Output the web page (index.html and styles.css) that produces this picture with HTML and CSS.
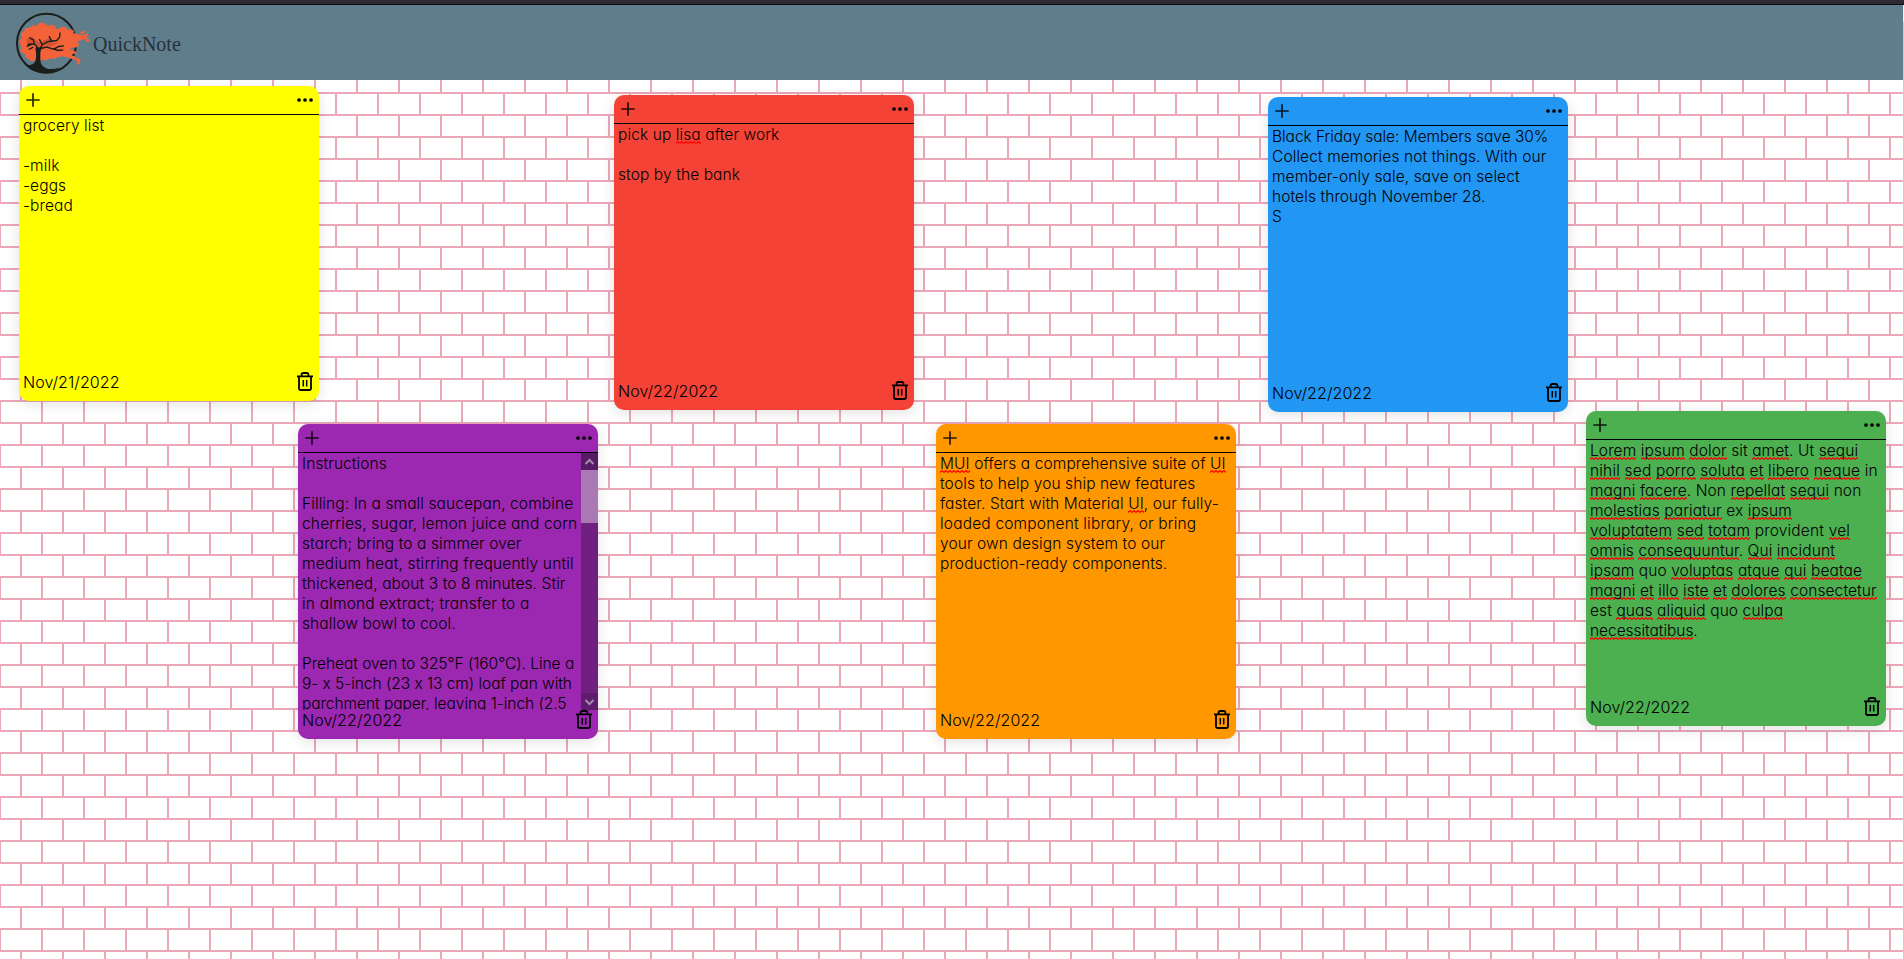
FILE: index.html
```html
<!DOCTYPE html>
<html lang="en">
<head>
<meta charset="utf-8">
<title>QuickNote</title>
<link rel="stylesheet" href="styles.css">
</head>
<body>
<svg width="0" height="0" class="defs">
  <symbol id="plus" viewBox="0 0 14 14"><path d="M7 .3v13.4M.3 7h13.4" stroke="#000" stroke-opacity=".85" stroke-width="1.7" fill="none"/></symbol>
  <symbol id="dots" viewBox="0 0 16 4"><circle cx="2" cy="2" r="1.85"/><circle cx="8" cy="2" r="1.85"/><circle cx="14" cy="2" r="1.85"/></symbol>
  <symbol id="trash" viewBox="0 0 16 19"><g fill="none" stroke="#000" stroke-width="1.8"><path d="M0 4.3h16M4.6 4V2.6Q4.6 1 6.2 1h3.6q1.6 0 1.6 1.6V4M2 4.5v11.7q0 1.8 1.8 1.8h8.4q1.8 0 1.8-1.8V4.5"/><path d="M6.3 8v6.6M9.7 8v6.6" stroke-width="1.5"/></g></symbol>
</svg>
<div class="topline"></div>
<header class="appbar">
  <svg class="logo" viewBox="45 28.5 240 198">
    <circle cx="139.500" cy="128" r="88.500" fill="none" stroke="#1b1f1b" stroke-width="6"/>
    <path fill="#f4623a" d="M58 120l8-8-4-12 10-8 4-9 14-2 8-7 12 2 6-7 12-3 10 6 10 4 10-3 8 4 2 8 12-2 8-5 10 2 4 8 12-2 8 5-2 7 12 2 10 4 12-2 10-4 2 5-8 5 8 2-4 6-14 1-8 4-10 2 6 5 0 8-8 5-12 1-6 4 12 5 8 5-2 5-10-2-4 5 10 4 4 5 10 1 4 6-4 12-8-2 2-8-10-5-10-2-4-5-10 0-10-4-8 5-8-2-6 6-12-2-8 3-10 4-10-3-6 8-10-2-6-4-8 4-8-4-6-8-8-2 2-8-10-4-6-8 4-6z"/>
    <path fill="#f4623a" d="M240 97l10-7 6 3-4 5-8 5zM257 116l8 1 5-4-1 9-7 3-5-4zM226 124l8-2 0 6-7 2zM249 109l5-1-1 5-4 0z"/>
    <path fill="#bd4426" opacity=".55" d="M78 118l16-12 12 12 14 8 18-10 20-4-6 12 22 4-18 8-22 6-22-2-12-8-14 4z"/>
    <path fill="#1b1f1b" d="M76 194q24 2 30-12 5-16 0-38l4-6 14 5q-5 14-3 34 1 20 17 26 14 6 42-1-16 15-42 16-36 1-62-24z"/>
    <path fill="none" stroke="#1b1f1b" stroke-width="4" d="M112 146l-4-12-12-4-14 2M104 132l-4-14-12-6M98 130l-18 8M118 148l10-17 18-8 24-3 9-10 1-14M126 132l-8-16M154 121l-7-14M122 144l18-4 22 6 14-8 16-2M160 145l14 5 16-2M100 140l-14 7"/>
  </svg>
  <span class="brand">QuickNote</span>
</header>
<div class="edge"></div>
<main class="board">
  <article class="note yellow">
    <div class="head"><svg class="plus"><use href="#plus"/></svg><svg class="dots"><use href="#dots"/></svg></div>
    <div class="text">grocery list

-milk
-eggs
-bread</div>
    <div class="foot"><span>Nov/21/2022</span><svg class="trash"><use href="#trash"/></svg></div>
  </article>
  <article class="note red">
    <div class="head"><svg class="plus"><use href="#plus"/></svg><svg class="dots"><use href="#dots"/></svg></div>
    <div class="text">pick up <u>lisa</u> after work

stop by the bank</div>
    <div class="foot"><span>Nov/22/2022</span><svg class="trash"><use href="#trash"/></svg></div>
  </article>
  <article class="note blue">
    <div class="head"><svg class="plus"><use href="#plus"/></svg><svg class="dots"><use href="#dots"/></svg></div>
    <div class="text"><span class="tight">Black Friday sale: Members save 30%</span>
Collect memories not things. With our
member-only sale, save on select
hotels through November 28.
S</div>
    <div class="foot"><span>Nov/22/2022</span><svg class="trash"><use href="#trash"/></svg></div>
  </article>
  <article class="note purple">
    <div class="head"><svg class="plus"><use href="#plus"/></svg><svg class="dots"><use href="#dots"/></svg></div>
    <div class="scroller"><div class="text">Instructions

Filling: In a small saucepan, combine
<span class="wide">cherries, sugar, lemon juice and corn</span>
starch; bring to a simmer over
<span class="wide">medium heat, stirring frequently until</span>
thickened, about 3 to 8 minutes. Stir
<span class="wide">in almond extract; transfer to a</span>
shallow bowl to cool.

<span class="tight">Preheat oven to 325°F (160°C). Line a</span>
<span class="tight">9- x 5-inch (23 x 13 cm) loaf pan with</span>
<span class="tight">parchment paper, leaving 1-inch (2.5</span></div>
    <div class="bar"><svg class="arrow" viewBox="0 0 17 17"><path d="M4.5 11L8.5 7l4 4"/></svg><div class="thumb"></div><svg class="arrow end" viewBox="0 0 17 17"><path d="M4.500 7l4 4 4-4"/></svg></div></div>
    <div class="foot"><span>Nov/22/2022</span><svg class="trash"><use href="#trash"/></svg></div>
  </article>
  <article class="note orange">
    <div class="head"><svg class="plus"><use href="#plus"/></svg><svg class="dots"><use href="#dots"/></svg></div>
    <div class="text"><u>MUI</u> offers a comprehensive suite of <u>UI</u>
tools to help you ship new features
faster. Start with Material <u>UI</u>, our fully-
<span class="wide">loaded component library, or bring</span>
your own design system to our
production-ready components.</div>
    <div class="foot"><span>Nov/22/2022</span><svg class="trash"><use href="#trash"/></svg></div>
  </article>
  <article class="note green">
    <div class="head"><svg class="plus"><use href="#plus"/></svg><svg class="dots"><use href="#dots"/></svg></div>
    <div class="text"><u>Lorem</u> <u>ipsum</u> <u>dolor</u> sit <u>amet</u>. Ut <u>sequi</u>
<span class="wide"><u>nihil</u> <u>sed</u> <u>porro</u> <u>soluta</u> <u>et</u> <u>libero</u> <u>neque</u> in</span>
<u>magni</u> <u>facere</u>. Non <u>repellat</u> <u>sequi</u> non
<u>molestias</u> <u>pariatur</u> ex <u>ipsum</u>
<span class="wide"><u>voluptatem</u> <u>sed</u> <u>totam</u> provident <u>vel</u></span>
<u>omnis</u> <u>consequuntur</u>. <u>Qui</u> <u>incidunt</u>
<u>ipsam</u> quo <u>voluptas</u> <u>atque</u> <u>qui</u> <u>beatae</u>
<u>magni</u> <u>et</u> <u>illo</u> <u>iste</u> <u>et</u> <u>dolores</u> <u>consectetur</u>
est <u>quas</u> <u>aliquid</u> quo <u>culpa</u>
<span class="tight"><u>necessitatibus</u>.</span></div>
    <div class="foot"><span>Nov/22/2022</span><svg class="trash"><use href="#trash"/></svg></div>
  </article>
</main>
</body>
</html>
```
FILE: styles.css
```css
* { box-sizing: border-box; }
body {
  margin: 0;
  height: 959px;
  overflow: hidden;
  font-family: Inter, "Open Sans", sans-serif;
  background: #fff url("data:image/svg+xml,%3Csvg xmlns='http://www.w3.org/2000/svg' width='42' height='44'%3E%3Cpath fill='%23eba8b9' fill-rule='evenodd' d='M0 0h42v44H0V0zm1 1h40v20H1V1zM0 23h20v20H0V23zm22 0h20v20H22V23z'/%3E%3C/svg%3E") 0 5px;
}
.defs { position: absolute; }
.topline { height: 5px; background: #2b2a33; border-bottom: 1px solid #0c0c0d; }
.appbar { height: 75px; background: #607d8b; display: flex; align-items: center; padding-left: 15px; }
.edge { position: absolute; right: 0; top: 5px; width: 1px; height: 954px; background: linear-gradient(#f0f0f2 17px, #cdcdcf 17px); }
.logo { width: 80px; height: 66px; }
.brand { font-family: "Liberation Serif", serif; font-size: 20px; color: #26323a; margin-left: -2px; padding-top: 3px; }
.board { position: relative; height: 879px; }
.note {
  position: absolute;
  width: 300px;
  height: 315px;
  border-radius: 10px;
  display: flex;
  flex-direction: column;
  box-shadow: 0 3px 14px rgba(0, 0, 0, .12);
}
.yellow { left: 19px; top: 6px; background: #ff0; }
.red { left: 614px; top: 15px; background: #f44336; }
.blue { left: 1268px; top: 17px; background: #2196f3; }
.purple { left: 298px; top: 344px; background: #9c27b0; }
.orange { left: 936px; top: 344px; background: #ff9800; }
.green { left: 1586px; top: 331px; background: #4caf50; }
.head {
  height: 29px;
  flex: none;
  border-bottom: 1px solid #000;
  display: flex;
  justify-content: space-between;
  align-items: center;
  padding: 0 6px 0 7px;
}
.plus { width: 14px; height: 14px; }
.dots { width: 16px; height: 4px; }
.text {
  flex: 1;
  padding: 1px 0 0 4px;
  font-size: 15.5px;
  line-height: 20px;
  letter-spacing: .1px;
  font-weight: 300;
  font-feature-settings: "cv11";
  white-space: pre;
  color: #000;
  overflow: hidden;
}
.tight { letter-spacing: -.04px; }
.wide { letter-spacing: .18px; }
u {
  text-decoration: none;
  background: url("data:image/svg+xml,%3Csvg xmlns='http://www.w3.org/2000/svg' width='4' height='3'%3E%3Cpath fill='none' stroke='%23f00' stroke-width='1.2' d='M-1 1.500L0 2.300 2 .7 4 2.300 5 1.500'/%3E%3C/svg%3E") 0 100% repeat-x;
}
.scroller { height: 257px; display: flex; }
.bar { width: 17px; background: #702081; display: flex; flex-direction: column; }
.arrow { width: 17px; height: 17px; background: #571b65; fill: none; stroke: #a58bac; stroke-width: 2; }
.thumb { height: 53px; background: #aa79b3; }
.end { margin-top: auto; background: #5f1b6e; }
.foot {
  height: 29px;
  flex: none;
  display: flex;
  justify-content: space-between;
  padding: 0 6px 0 4px;
  font-size: 16px;
  line-height: 20px;
  font-weight: 300;
  letter-spacing: .06px;
}
.trash { width: 16px; height: 19px; }
```
